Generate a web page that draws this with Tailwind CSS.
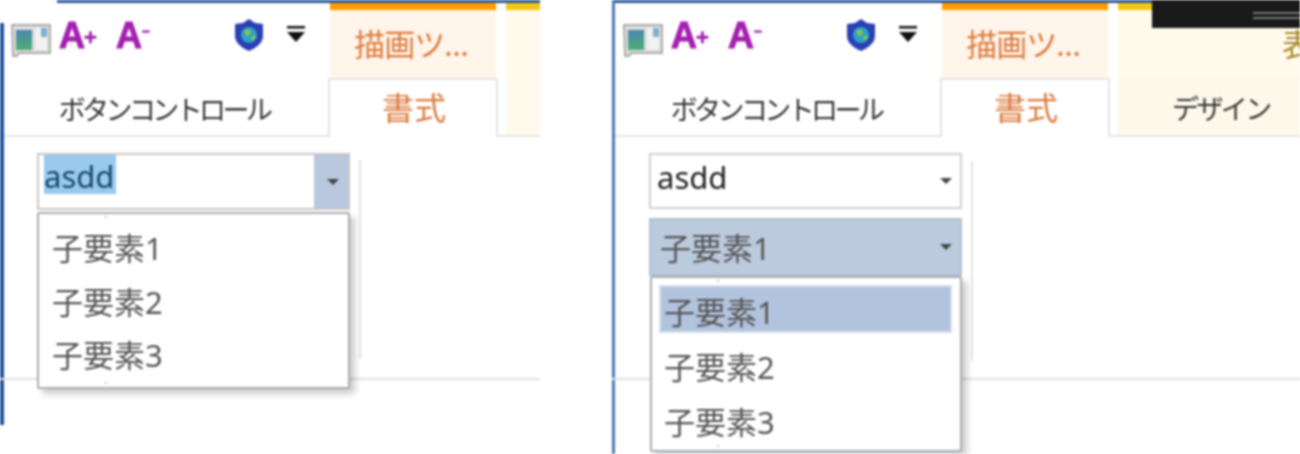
<!DOCTYPE html>
<html lang="ja">
<head>
<meta charset="utf-8">
<script src="https://cdn.jsdelivr.net/npm/@tailwindcss/browser@4"></script>
</head>
<body class="bg-white overflow-hidden">
<div class="flex w-[1300px] h-[454px] bg-white overflow-hidden blur-[0.8px] font-['Noto_Sans','Noto_Sans_CJK_JP',sans-serif]">

  <!-- LEFT PANEL -->
  <section class="relative w-[540px] h-[454px] shrink-0 overflow-hidden">
    <div class="absolute left-[57px] right-0 top-0 h-[3px] bg-[#2b579a]"></div>
    <div class="absolute left-0 top-[23px] w-[4px] h-[402px] bg-[#1f4f9c]"></div>
    <header class="flex h-[137px] border-b-2 border-[#e4e4e4]">
      <div class="w-[328px] shrink-0 flex flex-col">
        <div class="h-[78px] flex items-start pl-[11px] pt-[18px]">
          <svg class="w-[40px] h-[36px] mt-[5px]" viewBox="0 0 40 36"><path d="M1 2h38v28H8l-2 3H2z" fill="#dcdcdc" stroke="#adadad" stroke-width="2"/><defs><linearGradient id="g1" x1="0" y1="0" x2="0" y2="1"><stop offset="0" stop-color="#4a86b0"/><stop offset="1" stop-color="#4fae72"/></linearGradient></defs><rect x="5" y="7" width="16" height="20" fill="url(#g1)"/><rect x="24" y="5" width="12" height="22" fill="#f2f2f2"/><rect x="30" y="5" width="6" height="9" fill="#7fb0d2"/></svg>
          <span class="ml-[8px] w-[57px] text-[#a31fb0] font-['Liberation_Sans'] font-bold text-[36px] leading-[36px] flex items-start [-webkit-text-stroke:1px_#a31fb0]">A<span class="text-[22px] leading-[40px] -ml-[1px] [-webkit-text-stroke:0.5px_#a31fb0]">+</span></span>
          <span class="w-[117px] text-[#a31fb0] font-['Liberation_Sans'] font-bold text-[36px] leading-[36px] flex items-start [-webkit-text-stroke:1px_#a31fb0]">A<span class="text-[14px] leading-[26px] font-bold [-webkit-text-stroke:0.5px_#a31fb0]">–</span></span>
          <svg class="w-[32px] h-[34px]" viewBox="0 0 32 34"><path d="M16 1l6 4 8 1v12c0 7-7 12-14 15C9 30 2 25 2 18V6l8-1z" fill="#2b3fb3"/><circle cx="16" cy="17" r="8" fill="#2aa3c9"/><path d="M11 13l5-2 2 4-4 4zM18 19l4-2 1 3-4 3z" fill="#8bc34a"/></svg>
          <svg class="w-[20px] h-[18px] ml-[21px] mt-[8px]" viewBox="0 0 20 18"><rect x="1" y="0" width="18" height="2.5" fill="#111"/><path d="M1 6h18l-9 10z" fill="#111"/></svg>
        </div>
        <div class="flex-1 flex items-center justify-center text-[27px] text-[#333] pt-[8px] tracking-[-3.6px] whitespace-nowrap">ボタンコントロール</div>
      </div>
      <div class="w-[170px] shrink-0 flex flex-col">
        <div class="h-[78px] mx-[2px] border-t-[8px] mt-[2px] border-[#ff9c00] bg-[#fff5ea] flex items-center justify-center text-[#dc7a3c] text-[31px] pb-[2px] pr-[4px] tracking-[-1px]">描画ツ…</div>
        <div class="-mb-[2px] h-[59px] -mt-[2px] border-2 border-b-0 border-[#e4e4e4] bg-white flex items-center justify-center text-[#dc7a3c] text-[32px] pb-[2px] pl-[2px] relative">書式</div>
      </div>
      <div class="ml-[8px] flex-1 mt-[2px] border-t-[8px] border-[#f2c811] bg-[#fffaeb]"></div>
    </header>
    <main class="relative h-[243px] border-b-2 border-[#e0e0e0] pl-[37px] pt-[16px] flex items-start">
      <div class="w-[313px] h-[57px] border-2 border-[#c6c6c6] flex bg-white">
        <div class="flex-1 pl-[5px]"><span class="block w-[72px] h-[39px] bg-[#99c9ef] text-[#17496f] text-[31px] leading-[42px]">asdd</span></div>
        <div class="w-[34px] bg-[#b9c8de] flex items-center justify-center pl-[4px]"><div class="w-0 h-0 border-x-[6px] border-x-transparent border-t-[6px] border-t-[#444]"></div></div>
      </div>
      <div class="ml-[9px] mt-[7px] w-[2px] h-[199px] bg-[#e4e4e4]"></div>
      <div class="absolute left-[37px] top-[75px] w-[313px] h-[177px] bg-white border-2 border-[#a9acb0] rounded-[2px] shadow-[5px_5px_6px_rgba(0,0,0,0.2)] pl-[13px] pt-[8px] text-[#555] text-[31px] leading-[53.5px]">
        <div class="absolute left-[66px] top-[2px] w-[2px] h-[2px] bg-[#ccc]"></div>
        <div>子要素1</div>
        <div>子要素2</div>
        <div>子要素3</div>
        <div class="absolute left-[66px] bottom-[3px] w-[2px] h-[2px] bg-[#ccc]"></div>
      </div>
    </main>
  </section>

  <div class="w-[72px] shrink-0"></div>

  <!-- RIGHT PANEL -->
  <section class="relative w-[688px] h-[454px] shrink-0 overflow-hidden">
    <div class="absolute left-0 right-0 top-0 h-[3px] bg-[#2b579a]"></div>
    <div class="absolute left-0 top-0 w-[3px] h-[454px] bg-[#4a78b8]"></div>
    <div class="absolute right-0 top-0 w-[148px] h-[28px] bg-[#1a1a1a] z-10 flex flex-col items-end pt-[12px] gap-[3px]">
      <div class="w-[47px] h-[2px] bg-[#777]"></div>
      <div class="w-[47px] h-[2px] bg-[#777]"></div>
    </div>
    <header class="flex h-[137px] border-b-2 border-[#e4e4e4]">
      <div class="w-[328px] shrink-0 flex flex-col">
        <div class="h-[78px] flex items-start pl-[11px] pt-[18px]">
          <svg class="w-[40px] h-[36px] mt-[5px]" viewBox="0 0 40 36"><path d="M1 2h38v28H8l-2 3H2z" fill="#dcdcdc" stroke="#adadad" stroke-width="2"/><defs><linearGradient id="g2" x1="0" y1="0" x2="0" y2="1"><stop offset="0" stop-color="#4a86b0"/><stop offset="1" stop-color="#4fae72"/></linearGradient></defs><rect x="5" y="7" width="16" height="20" fill="url(#g2)"/><rect x="24" y="5" width="12" height="22" fill="#f2f2f2"/><rect x="30" y="5" width="6" height="9" fill="#7fb0d2"/></svg>
          <span class="ml-[8px] w-[57px] text-[#a31fb0] font-['Liberation_Sans'] font-bold text-[36px] leading-[36px] flex items-start [-webkit-text-stroke:1px_#a31fb0]">A<span class="text-[22px] leading-[40px] -ml-[1px] [-webkit-text-stroke:0.5px_#a31fb0]">+</span></span>
          <span class="w-[117px] text-[#a31fb0] font-['Liberation_Sans'] font-bold text-[36px] leading-[36px] flex items-start [-webkit-text-stroke:1px_#a31fb0]">A<span class="text-[14px] leading-[26px] font-bold [-webkit-text-stroke:0.5px_#a31fb0]">–</span></span>
          <svg class="w-[32px] h-[34px]" viewBox="0 0 32 34"><path d="M16 1l6 4 8 1v12c0 7-7 12-14 15C9 30 2 25 2 18V6l8-1z" fill="#2b3fb3"/><circle cx="16" cy="17" r="8" fill="#2aa3c9"/><path d="M11 13l5-2 2 4-4 4zM18 19l4-2 1 3-4 3z" fill="#8bc34a"/></svg>
          <svg class="w-[20px] h-[18px] ml-[21px] mt-[8px]" viewBox="0 0 20 18"><rect x="1" y="0" width="18" height="2.5" fill="#111"/><path d="M1 6h18l-9 10z" fill="#111"/></svg>
        </div>
        <div class="flex-1 flex items-center justify-center text-[27px] text-[#333] pt-[8px] tracking-[-3.6px] whitespace-nowrap">ボタンコントロール</div>
      </div>
      <div class="w-[170px] shrink-0 flex flex-col">
        <div class="h-[78px] mx-[2px] border-t-[8px] mt-[2px] border-[#ff9c00] bg-[#fff5ea] flex items-center justify-center text-[#dc7a3c] text-[31px] pb-[2px] pr-[4px] tracking-[-1px]">描画ツ…</div>
        <div class="-mb-[2px] h-[59px] -mt-[2px] border-2 border-b-0 border-[#e4e4e4] bg-white flex items-center justify-center text-[#dc7a3c] text-[32px] pb-[2px] pl-[2px] relative">書式</div>
      </div>
      <div class="ml-[8px] flex-1 mt-[2px] border-t-[8px] border-[#f2c811] flex flex-col overflow-hidden">
        <div class="h-[68px] bg-[#fffaeb] pl-[164px] pt-[14px] text-[#a8892a] text-[31px] leading-[40px] whitespace-nowrap">表</div>
        <div class="flex-1 bg-[#fdf9ea] w-full pl-[54px] flex items-center text-[#333] text-[27px] pt-[6px] tracking-[-2.6px] whitespace-nowrap">デザイン</div>
      </div>
    </header>
    <main class="relative h-[243px] border-b-2 border-[#e0e0e0] pl-[37px] pt-[16px] flex items-start">
      <div class="flex flex-col gap-[9px] w-[313px]">
        <div class="h-[56px] border-2 border-[#d0d0d0] flex items-center bg-white pl-[6px] pr-[8px] justify-between">
          <span class="text-[#222] text-[31px] leading-[42px] pb-[8px]">asdd</span>
          <div class="w-0 h-0 border-x-[6px] border-x-transparent border-t-[6px] border-t-[#444]"></div>
        </div>
        <div class="h-[58px] border-2 border-[#b5c0d2] flex items-center bg-[#bccade] pl-[9px] pr-[8px] justify-between">
          <span class="text-[#555] text-[31px] leading-[42px] pt-[1px]">子要素1</span>
          <div class="w-0 h-0 border-x-[6px] border-x-transparent border-t-[6px] border-t-[#444]"></div>
        </div>
      </div>
      <div class="ml-[9px] mt-[8px] w-[2px] h-[199px] bg-[#e4e4e4]"></div>
      <div class="absolute left-[38px] top-[139px] w-[312px] h-[176px] bg-white border-2 border-[#a9acb0] rounded-[2px] shadow-[5px_5px_6px_rgba(0,0,0,0.2)] pl-[7px] pr-[8px] pt-[7px] text-[#555] text-[31px]">
        <div class="absolute left-[65px] top-[2px] w-[2px] h-[2px] bg-[#ccc]"></div>
        <div class="h-[48px] bg-[#b1c3dd] border-2 border-[#d5deec] pl-[3px] leading-[50px]">子要素1</div>
        <div class="h-[55px] mt-[7px] pl-[5px] leading-[55px]">子要素2</div>
        <div class="h-[54px] pl-[5px] leading-[54px]">子要素3</div>
        <div class="absolute left-[65px] bottom-[3px] w-[2px] h-[2px] bg-[#ccc]"></div>
      </div>
    </main>
  </section>
</div>
</body>
</html>
